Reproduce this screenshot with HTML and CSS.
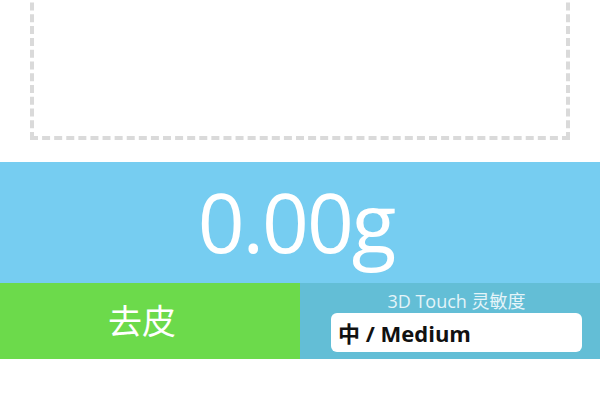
FILE: index.html
```html
<!DOCTYPE html>
<html lang="zh">
<head>
<meta charset="utf-8">
<title>Scale</title>
<link rel="stylesheet" href="styles.css">
</head>
<body>
<div class="page">
  <div class="canvas-wrap">
    <div class="canvas"></div>
  </div>
  <div class="display">0.00g</div>
  <div class="controls">
    <button class="tare">去皮</button>
    <div class="sens">
      <label class="sens-label" for="sens">3D Touch 灵敏度</label>
      <select id="sens" class="sens-select">
        <option>中 / Medium</option>
      </select>
    </div>
  </div>
</div>
</body>
</html>
```

FILE: styles.css
```css
html, body {
  margin: 0;
  padding: 0;
  background: #ffffff;
  font-family: "Open Sans", "Noto Sans", "Noto Sans CJK SC", sans-serif;
}

.page {
  width: 600px;
  height: 400px;
  overflow: hidden;
  display: flex;
  flex-direction: column;
}

.canvas-wrap {
  height: 140px;
  padding: 0 30px;
  margin-bottom: 22px;
  display: flex;
  flex-direction: column;
  justify-content: flex-end;
}

.canvas {
  height: 200px;
  flex: none;
  border: 4px dashed #dadada;
}

.display {
  height: 121px;
  background: #76cdf1;
  color: #ffffff;
  font-size: 82px;
  letter-spacing: -2px;
  display: flex;
  align-items: center;
  justify-content: center;
  line-height: 1;
  padding: 0 8px 4px 0;
  box-sizing: border-box;
}

.controls {
  display: flex;
  height: 76px;
}

.tare {
  flex: 0 0 300px;
  width: 300px;
  border: none;
  margin: 0;
  background: #6cda4b;
  color: #ffffff;
  font-family: "Noto Sans CJK SC", sans-serif;
  font-size: 34px;
  line-height: 1;
  padding: 0 16px 2px 0;
}

.sens {
  flex: 0 0 300px;
  width: 300px;
  background: #63bed6;
  display: flex;
  flex-direction: column;
  align-items: stretch;
  padding: 8px 18px 7px 31px;
  box-sizing: border-box;
}

.sens-label {
  color: #e4f4f9;
  font-family: "Open Sans", "Noto Sans CJK SC", sans-serif;
  font-size: 18px;
  line-height: 21px;
  text-align: center;
  margin-bottom: 1px;
}

.sens-select {
  appearance: none;
  -webkit-appearance: none;
  border: none;
  border-radius: 6px;
  background: #ffffff;
  height: 39px;
  padding: 0 7px;
  font-family: "Open Sans", "Noto Sans CJK SC", sans-serif;
  font-weight: 700;
  font-size: 22px;
  color: #111111;
}
```
